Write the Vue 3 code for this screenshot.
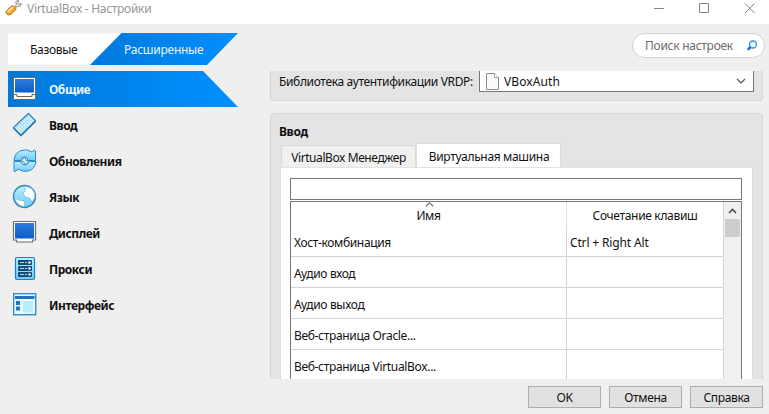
<script setup>
const sections = [
  { id: 'general', title: 'Общие' },
  { id: 'input', title: 'Ввод' },
  { id: 'update', title: 'Обновления' },
  { id: 'language', title: 'Язык' },
  { id: 'display', title: 'Дисплей' },
  { id: 'proxy', title: 'Прокси' },
  { id: 'interface', title: 'Интерфейс' },
]
const active = 'general'
const shortcuts = [
  { name: 'Хост-комбинация', keys: 'Ctrl + Right Alt' },
  { name: 'Аудио вход', keys: '' },
  { name: 'Аудио выход', keys: '' },
  { name: 'Веб-страница Oracle...', keys: '' },
  { name: 'Веб-страница VirtualBox...', keys: '' },
]
</script>

<template>
  <div class="window">
    <header class="titlebar">
      <svg class="app-icon" width="17" height="16" viewBox="0 0 17 16">
        <path d="M8.5 7.5 L11.5 4.5 C9.5 1.5 12 0 14 .8 L12.5 3 L14 4.6 L16 3.4 C16.5 6 14 7.2 12.4 6 L10 8.5" fill="#eee" stroke="#858585" stroke-width="1" />
        <path d="M1.6 10.7 L6.5 6 Q10.8 5.500 11 9.400 L6 14.200 Q3 16 1.4 13.6 Q.3 12 1.6 10.7Z" fill="#fba62c" stroke="#b96d14" />
        <path d="M3 11.5 L7.5 7.7" stroke="#ffe3a0" stroke-width="1.8" stroke-linecap="round" />
      </svg>
      <h1>VirtualBox - Настройки</h1>
      <svg class="controls" width="102" height="12" viewBox="0 0 102 12" fill="none" stroke="#828282">
        <path d="M0 5.500H10M45.500 .5H54.500V9.500H45.500ZM91 .5L100.500 10M100.500 .5L91 10" />
      </svg>
    </header>

    <div class="top">
      <nav class="modes">
        <svg class="modes-bg" width="230" height="32" viewBox="0 0 230 32">
          <defs>
            <linearGradient id="modeFill"><stop stop-color="#0078dc" /><stop offset="1" stop-color="#0090ff" /></linearGradient>
          </defs>
          <path d="M0 .5H113L82 31.500H0Z" fill="#fff" />
          <path d="M113.500 0H230L199 32H82Z" fill="url(#modeFill)" />
        </svg>
        <span class="mode basic">Базовые</span>
        <span class="mode expert">Расширенные</span>
      </nav>
      <div class="search">
        <span>Поиск настроек</span>
        <svg width="12" height="12" viewBox="0 0 12 12">
          <circle cx="7" cy="4.500" r="3.500" fill="#e8f7ff" stroke="#2d8fdc" stroke-width="1.300" />
          <path d="M4 7.500L2.500 9" stroke="#1b78cc" stroke-width="2.600" stroke-linecap="round" />
        </svg>
      </div>
    </div>

    <div class="body">
      <ul class="sections">
        <li v-for="s in sections" :key="s.id" :class="{ active: s.id === active }">
          <svg width="26" height="26" viewBox="0 0 26 26">
            <defs>
              <linearGradient id="screen" x2="0" y2="1"><stop stop-color="#2f7ddc" /><stop offset="1" stop-color="#0a5cc8" /></linearGradient>
              <linearGradient id="sky" x2="0" y2="1"><stop stop-color="#b8f1ff" /><stop offset="1" stop-color="#72c9f5" /></linearGradient>
            </defs>
            <template v-if="s.id === 'general'">
              <path d="M1.500 1.500H23.500V23.500H1.500Z" fill="#fff" stroke="#6c6c66" />
              <path d="M3 3H22V16.500H3Z" fill="url(#screen)" />
              <path d="M2 18.500H5V20.500H20V18.500H23" fill="none" stroke="#66665f" />
            </template>
            <template v-else-if="s.id === 'display'">
              <path d="M1.500 1.500H23.500V20H20.500V22H4.500V20H1.500Z" fill="#fff" stroke="#6d6d69" stroke-width="1.200" />
              <path d="M3 3H22V18.500H3Z" fill="url(#screen)" />
            </template>
            <template v-else-if="s.id === 'input'">
              <path d="M16.500 1.500L23.500 9L9 23.500L1.500 15.500Z" fill="#d8f5ff" stroke="#3586be" stroke-width="1.400" stroke-linejoin="round" />
              <path d="M16 4.500L4.500 15.500M17.500 6.300L6.200 17.200M19.200 8L8 19M21 9.700L9.500 20.800" stroke="#72bde4" stroke-width="1.100" stroke-dasharray="1.300 1.100" />
              <path d="M1.700 16.200L9 23.500L23.500 9.200" fill="none" stroke="#2477af" stroke-width="1.500" />
            </template>
            <template v-else-if="s.id === 'update'">
              <path d="M2 12.500Q2.500 5 9 2.500Q15 .5 20 4L22.500 2L23.500 3V12.500H16Q15.500 9 12.500 9Q9 9 8.500 12.500Z" fill="url(#sky)" stroke="#2b89c8" stroke-linejoin="round" />
              <path d="M24 13.500Q23 21 16.500 23Q11 24.500 6 21L3 24L2 23V13.500H9Q10 17 13 17Q16 17 17 13.500Z" fill="url(#sky)" stroke="#2b89c8" stroke-linejoin="round" />
              <path d="M9 13L13 9L14 12.500H17L12.500 17L12 13.500Z" fill="#e4faff" stroke="#2f7fad" stroke-width=".8" />
            </template>
            <template v-else-if="s.id === 'language'">
              <circle cx="12.500" cy="12.500" r="11" fill="url(#sky)" stroke="#3985b5" stroke-width="1.300" />
              <path d="M11.500 2.700Q16 1.500 20 5Q23.500 8.500 22.700 14L20 18L17.500 14L13 13L11 9L14 6Z" fill="#fff" stroke="#65b6df" stroke-width=".7" />
              <path d="M2.500 14L7 16L12 17L13 21L11 22.700Q4 20 2.500 14Z" fill="#fff" stroke="#65b6df" stroke-width=".7" />
            </template>
            <template v-else-if="s.id === 'proxy'">
              <rect x="3.500" y="1.500" width="19" height="22" rx="1.500" fill="url(#sky)" stroke="#1880cb" stroke-width="1.200" />
              <template v-for="y in [4, 10, 16]" :key="y">
                <rect x="6" :y="y" width="14" height="5" rx=".8" fill="#164b78" />
                <path :d="`M8 ${y + 2.5}h4M13 ${y + 2.5}h2`" stroke="#9adfff" stroke-width="1.200" />
                <circle cx="17.500" :cy="y + 2.5" r="1.300" fill="#e1f7ff" />
              </template>
            </template>
            <template v-else>
              <rect x="1.700" y="1.700" width="22" height="21" fill="#e9fbff" stroke="#328dcc" stroke-width="1.400" />
              <path d="M3 4H22.500V7H3ZM4 9H8V13H4ZM4 14.500H8V18.500H4Z" fill="#2271c4" />
              <path d="M11 9H21V20.500H11Z" fill="#b8ebfc" />
            </template>
          </svg>
          <span>{{ s.title }}</span>
        </li>
      </ul>

      <main class="scroll">
        <section class="group remote">
          <label>Библиотека аутентификации VRDP:</label>
          <div class="combo">
            <svg width="13" height="17" viewBox="0 0 13 17">
              <path d="M.5 .5H8.500L12.500 4.500V16.500H.5Z" fill="#fafafa" stroke="#8d8d8d" />
              <path d="M8.500 .5V4.500H12.500" fill="#fff" stroke="#a0a0a0" />
            </svg>
            <span>VBoxAuth</span>
            <svg class="chevron" width="10" height="6" viewBox="0 0 10 6"><path d="M1 1L5 5L9 1" fill="none" stroke="#555" stroke-width="1.200" /></svg>
          </div>
        </section>

        <section class="group keyboard">
          <h2>Ввод</h2>
          <div class="tabs">
            <span class="tab manager">VirtualBox Менеджер</span>
            <span class="tab current">Виртуальная машина</span>
          </div>
          <div class="pane">
            <div class="filter"></div>
            <div class="table">
              <div class="grid">
                <div class="head">
                  <span>
                    <svg class="sort" width="9" height="5" viewBox="0 0 9 5"><path d="M.8 4.300L4.500 .8L8.200 4.300" fill="none" stroke="#777" stroke-width="1.200" /></svg>
                    Имя
                  </span>
                  <span class="keys-title">Сочетание клавиш</span>
                </div>
                <div v-for="r in shortcuts" :key="r.name" class="row">
                  <span>{{ r.name }}</span>
                  <span class="keys">{{ r.keys }}</span>
                </div>
              </div>
              <div class="bar">
                <svg width="9" height="6" viewBox="0 0 9 6"><path d="M1 5L4.500 1.500L8 5" fill="none" stroke="#4c4c4c" stroke-width="1.600" /></svg>
                <div class="thumb"></div>
              </div>
            </div>
          </div>
        </section>
      </main>
    </div>

    <footer class="actions">
      <button>OK</button>
      <button>Отмена</button>
      <button>Справка</button>
    </footer>
  </div>
</template>

<style>
body { overflow: hidden; }
</style>

<style scoped>
* { box-sizing: border-box; }
.window {
  width: 769px; height: 414px; overflow: hidden;
  display: flex; flex-direction: column;
  background: #efefef; color: #111;
  font: 12px/16px "Noto Sans", "Open Sans", sans-serif;
  letter-spacing: -.33px;
  white-space: nowrap;
}
.titlebar { height: 24px; flex: none; display: flex; align-items: flex-start; background: #fff; padding-left: 5px; }
.titlebar h1 { margin: 1px 0 0 5px; font-size: 12px; font-weight: 400; color: #969696; letter-spacing: -.3px; }
.controls { margin: 3px 13px 0 auto; }
.top { height: 47px; flex: none; display: flex; justify-content: space-between; align-items: flex-start; padding: 9px 4px 0 8px; }
.modes { position: relative; width: 230px; height: 32px; display: flex; align-items: center; }
.modes-bg { position: absolute; inset: 0; }
.mode { position: relative; padding-top: 1px; }
.basic { margin-left: 22px; width: 94px; }
.expert { color: #e9f5ff; letter-spacing: -.25px; }
.search {
  width: 133px; height: 25px; border: 1px solid #cfd1d3; border-radius: 13px; background: #fff;
  display: flex; align-items: center; justify-content: space-between; padding: 0 6px 0 12px; color: #6b6b6b;
  letter-spacing: -.27px;
}
.body { height: 308px; flex: none; display: flex; padding-left: 8px; }
.sections { width: 230px; margin: 0 32px 0 0; padding: 0; list-style: none; font-weight: 700; letter-spacing: -.45px; }
.sections li { height: 36px; display: flex; align-items: center; gap: 11px; padding-left: 4px; }
.sections li > span { padding-top: 2px; }
.sections li.active {
  color: #e9f5ff; background: linear-gradient(90deg, #0078d9, #0090ff);
  clip-path: polygon(0 0, 195px 0, 100% 100%, 0 100%);
}
.scroll { width: 493px; overflow: hidden; }
.group { background: #e4e4e4; border: 1px solid #d4d5d5; }
.remote {
  height: 30px; border-top: 0; border-radius: 0 0 4px 4px; margin-bottom: 12px;
  display: flex; align-items: flex-start; padding: 0 8px;
}
.remote label { width: 200px; padding-top: 3px; letter-spacing: -.36px; }
.combo { height: 21px; flex: 1; background: #fff; border: 1px solid #777; border-top: 0; display: flex; align-items: center; padding: 0 7px 0 6px; letter-spacing: .1px; }
.combo span { margin-left: 5px; padding-top: 2px; }
.chevron { margin-left: auto; }
.keyboard { height: 300px; border-radius: 4px; padding: 9px 9px 0; }
.keyboard h2 { margin: 0 0 0 -1px; height: 20px; font-size: 12px; line-height: 17px; letter-spacing: -.35px; }
.tabs { height: 24px; display: flex; align-items: flex-end; padding-left: 1px; }
.tab { border: 1px solid #d8d8d8; border-bottom: 0; text-align: center; }
.manager { width: 135px; height: 22px; background: #f0f0f0; padding-top: 4px; letter-spacing: -.42px; }
.current { width: 145px; height: 24px; background: #fff; padding: 5px 0 0 1px; border-color: #dcdcdc; }
.pane { height: 230px; background: #fff; border: 1px solid #dcdcdc; border-top-color: #e2e2e2; padding: 10px 10px 0 9px; }
.filter { height: 22px; border: 1px solid #777; margin-bottom: 1px; }
.table { height: 200px; display: flex; border: 1px solid #777; }
.grid { flex: 1; }
.head, .row { display: grid; grid-template-columns: 275px 1fr; }
.head { height: 24px; text-align: center; }
.head > span { position: relative; padding-top: 6px; }
.head .keys-title { border-left: 1px solid #e2e2e2; }
.sort { position: absolute; left: 134px; top: 0; }
.row { height: 31px; border-bottom: 1px solid #d3d5d5; line-height: 33px; }
.row > span { height: 30px; padding-left: 3px; }
.row > .keys { border-left: 1px solid #d3d3d3; letter-spacing: -.15px; }
.bar { width: 18px; background: #f0f0f0; border-left: 1px solid #d5d5d5; display: flex; flex-direction: column; align-items: center; }
.bar svg { margin: 6px 0 5px; flex: none; }
.thumb { width: 15px; height: 18px; background: #cdcdcd; }
.actions { display: flex; justify-content: flex-end; gap: 8px; padding: 7px 6px 0 0; }
.actions button { width: 73px; height: 22px; padding: 1px 0 0; border: 1px solid #adadad; background: #e1e1e1; color: #111; font: inherit; letter-spacing: -.35px; }
</style>
